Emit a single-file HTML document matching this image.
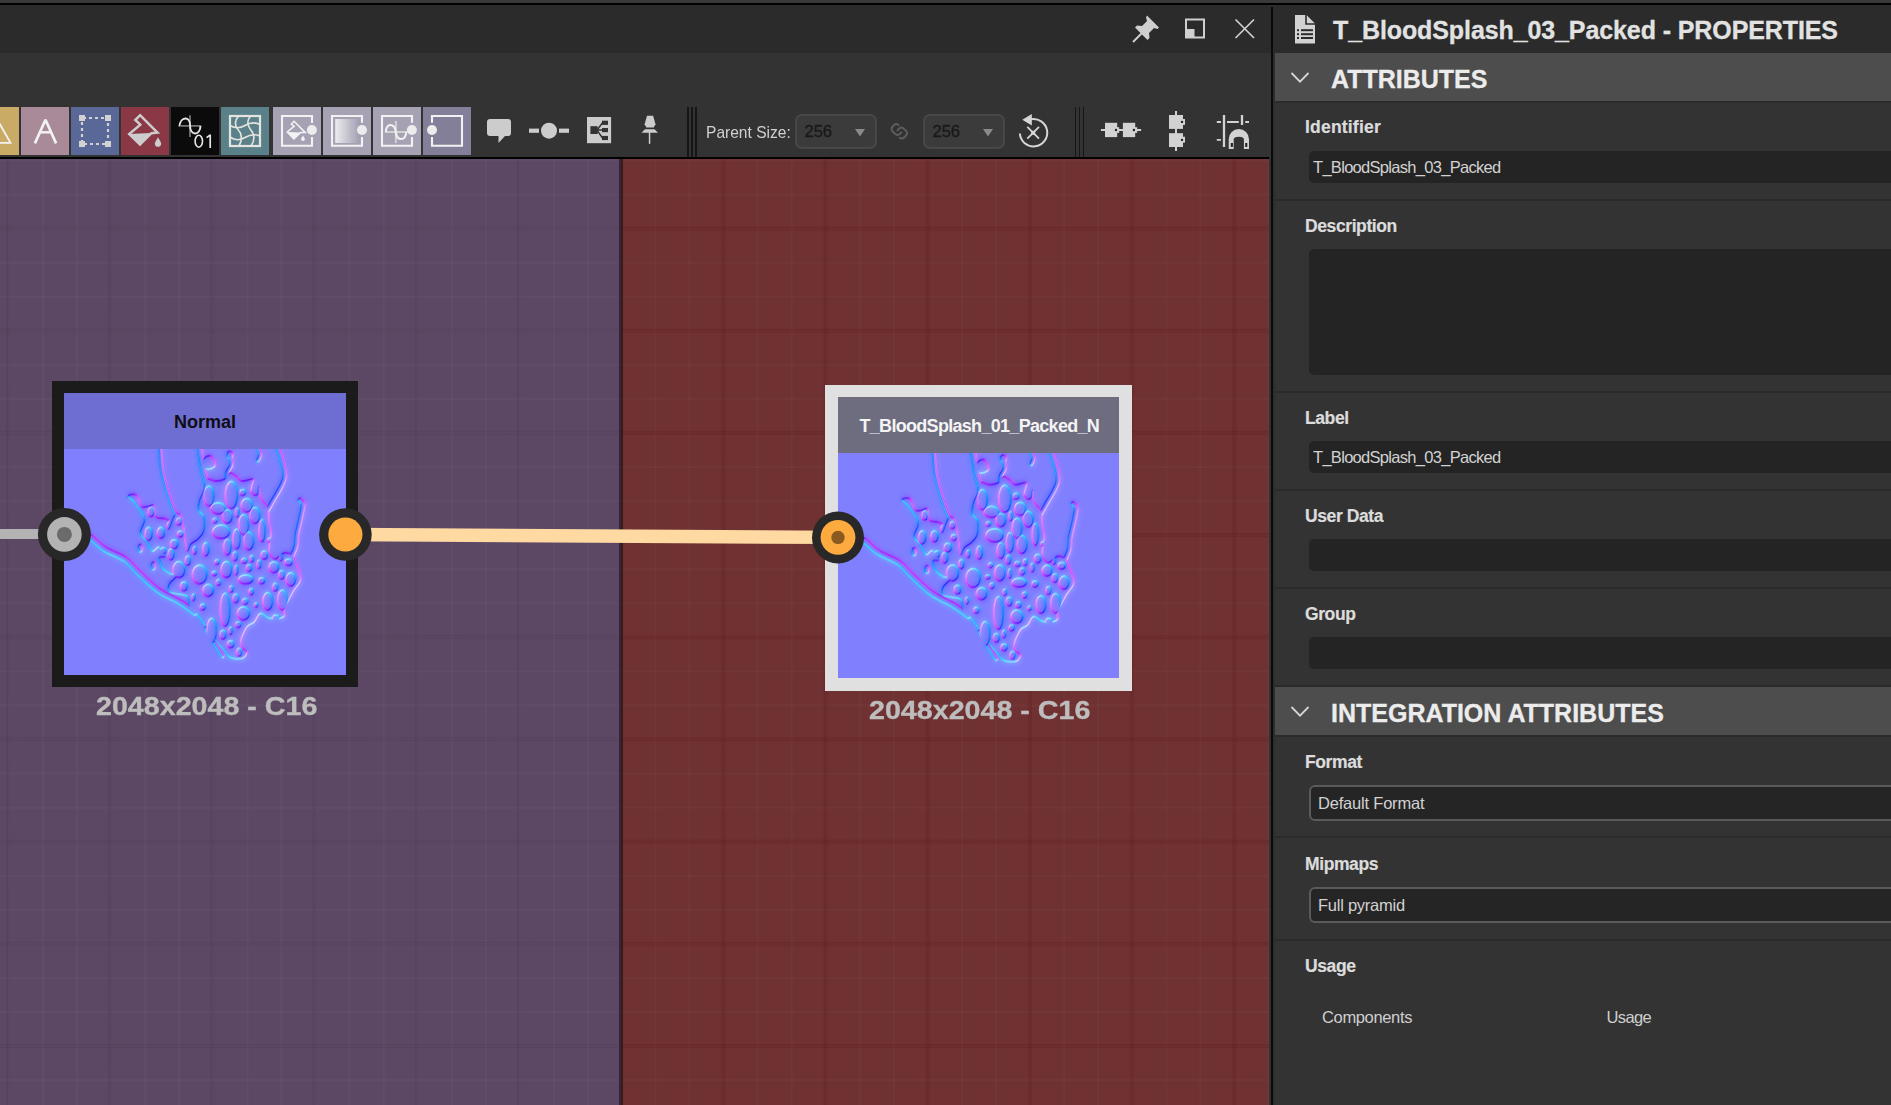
<!DOCTYPE html>
<html><head><meta charset="utf-8">
<style>
*{margin:0;padding:0;box-sizing:border-box}
html,body{width:1891px;height:1105px;overflow:hidden;background:#333;font-family:"Liberation Sans",sans-serif}
.a{position:absolute}
.t{position:absolute;white-space:nowrap;line-height:1}
.btn{position:absolute;top:107px;width:48px;height:48px}
.btn svg{position:absolute;left:0;top:0}
.sec-sep{position:absolute;left:1275px;width:616px;height:2px;background:#2b2b2b}
.lbl{position:absolute;-webkit-text-stroke:0.2px #dcdcdc;left:1305px;letter-spacing:-0.4px;font-weight:bold;font-size:17.5px;color:#dcdcdc;white-space:nowrap;line-height:1}
.inp{position:absolute;left:1309px;width:600px;height:32px;background:#242424;border-radius:5px}
.itx{position:absolute;letter-spacing:-0.7px;font-size:16.5px;color:#d2d2d2;white-space:nowrap;line-height:1}
</style></head>
<body>
<!-- top strip -->
<div class="a" style="left:0;top:0;width:1891px;height:3px;background:#393939"></div>
<div class="a" style="left:0;top:3px;width:1891px;height:2px;background:#000"></div>
<div class="a" style="left:0;top:5px;width:1891px;height:48px;background:#2b2b2b"></div>
<!-- toolbar -->
<div class="a" style="left:0;top:53px;width:1271px;height:104px;background:#333"></div>
<div class="a" style="left:0;top:157px;width:1269px;height:2px;background:#000"></div>


<!-- TOOLBAR BUTTONS -->
<div class="btn" style="left:-29px;background:#c9ab66">
 <svg width="48" height="48" viewBox="0 0 48 48"><path d="M24 8.5 L39.5 35.8 H8.5 Z" fill="none" stroke="#f2f2f2" stroke-width="1.8"/></svg>
</div>
<div class="btn" style="left:21px;background:#a88a99">
 <svg width="48" height="48" viewBox="0 0 48 48"><path d="M13.9 36.4 L24.5 12.8 L35.1 36.4" fill="none" stroke="#f2f2f2" stroke-width="2.7" stroke-linejoin="bevel"/><path d="M18.6 25.3 H30.4" stroke="#f2f2f2" stroke-width="2.5"/></svg>
</div>
<div class="btn" style="left:71px;background:#5a6898">
 <svg width="48" height="48" viewBox="0 0 48 48">
  <path d="M11 11 H37 V37 H11 Z" fill="none" stroke="#d2d2d2" stroke-width="2.2" stroke-dasharray="3 3" stroke-dashoffset="-1"/>
  <rect x="8" y="8" width="6" height="6" fill="#d2d2d2"/><rect x="34" y="8" width="6" height="6" fill="#d2d2d2"/>
  <rect x="8" y="34" width="6" height="6" fill="#d2d2d2"/><rect x="34" y="34" width="6" height="6" fill="#d2d2d2"/>
 </svg>
</div>
<div class="btn" style="left:121px;background:#8a3746">
 <svg width="48" height="48" viewBox="0 0 48 48">
  <path d="M8 27 L19 37.4 L30.4 26 Z" fill="#cdcdcd"/>
  <path d="M36.5 25.6 L19.1 8.2 L14.3 13 L19.3 17.6 L8.2 27 L19 37.4 L30.4 26.2 Z" fill="none" stroke="#cdcdcd" stroke-width="2.5" stroke-linejoin="miter"/>
  <path d="M37 30.2 C38.5 33 40.2 35 40.2 36.7 C40.2 38.6 38.7 39.8 37 39.8 C35.3 39.8 33.8 38.6 33.8 36.7 C33.8 35 35.5 33 37 30.2 Z" fill="#cdcdcd"/>
 </svg>
</div>
<div class="btn" style="left:171px;background:#0b0b0b">
 <svg width="48" height="48" viewBox="0 0 48 48">
  <path d="M19 8.2 V29.9" stroke="#7a7a7a" stroke-width="1.7"/>
  <path d="M9.7 18.9 H29.5" stroke="#7a7a7a" stroke-width="1.7"/>
  <path d="M8.4 19.5 C9.3 9 19.6 9 19.1 18.7 C18.8 29 29.4 29 29.5 18.7" fill="none" stroke="#e6e6e6" stroke-width="1.9"/>
  <ellipse cx="27.8" cy="34.2" rx="3.7" ry="6" fill="none" stroke="#e6e6e6" stroke-width="1.6"/>
  <path d="M39.2 27.6 V41 M39.3 27.9 L35.6 30.6" fill="none" stroke="#e6e6e6" stroke-width="1.7"/>
 </svg>
</div>
<div class="btn" style="left:221px;background:#5a8189">
 <svg width="48" height="48" viewBox="0 0 48 48">
  <rect x="9" y="9" width="30" height="30" fill="none" stroke="#e6e4e0" stroke-width="2.2"/>
  <g fill="none" stroke="#e6e4e0" stroke-width="1.6">
  <path d="M9 18.5 C14 21.5 19 21.5 24 18.5 C29 15.5 33 14.5 39 17.5"/>
  <path d="M9 30 C14 33.5 19 33.5 24 30.5 C29 27.5 33 26.5 39 29"/>
  <path d="M17.4 9 C13.5 14 14 19 17 22.5 C21 26.5 21.5 33 18 39"/>
  <path d="M29.5 9 C25.8 13.5 26.5 18.5 29.5 22.5 C33.5 27 34 33 30 39"/>
  </g>
 </svg>
</div>
<div class="btn" style="left:273px;background:#a6a2b4">
 <svg width="48" height="48" viewBox="0 0 48 48">
  <path d="M39 15.9 V9 H9 V38.8 H39 V30" fill="none" stroke="#f2f2f2" stroke-width="2.1"/>
  <circle cx="38.9" cy="23" r="5" fill="#ececec"/>
  <path d="M14.1 25 L20.9 31.9 L27.4 25.6 Z" fill="#f2f2f2"/>
  <path d="M32.4 25.6 L21.1 14.3 L18.3 17.1 L21.2 19.2 L14.2 25 L20.9 31.9 L27.4 25.6 Z" fill="none" stroke="#f2f2f2" stroke-width="1.5"/>
  <path d="M30 28.6 C30.8 30.2 31.9 31.2 31.9 32.3 C31.9 33.4 31 34 30 34 C29 34 28.1 33.4 28.1 32.3 C28.1 31.2 29.2 30.2 30 28.6 Z" fill="#f2f2f2"/>
 </svg>
</div>
<div class="btn" style="left:323px;background:#a6a2b4">
 <svg width="48" height="48" viewBox="0 0 48 48">
  <defs><linearGradient id="g1" x1="0" x2="1" y1="0" y2="0"><stop offset="0" stop-color="#ececee"/><stop offset="1" stop-color="#a29eb2"/></linearGradient></defs>
  <path d="M39 15.8 V9 H9 V38.8 H39 V30" fill="none" stroke="#f2f2f2" stroke-width="2.1"/>
  <rect x="12.2" y="12" width="24.5" height="24" fill="url(#g1)"/>
  <circle cx="39" cy="23" r="5" fill="#ececec"/>
 </svg>
</div>
<div class="btn" style="left:373px;background:#a6a2b4">
 <svg width="48" height="48" viewBox="0 0 48 48">
  <path d="M39 15.8 V9 H9 V38.8 H39 V30" fill="none" stroke="#f2f2f2" stroke-width="2.1"/>
  <path d="M22.9 13.9 V36 M12.2 24.9 H33.9" stroke="#d2d2d0" stroke-width="2"/>
  <path d="M12.8 25 C13.5 15.5 21.5 15.5 22.8 25 C24 34.5 32.5 34.5 33.4 24.6" fill="none" stroke="#f2f2f2" stroke-width="2"/>
  <circle cx="38.9" cy="23" r="5" fill="#ececec"/>
 </svg>
</div>
<div class="btn" style="left:423px;background:#847f99">
 <svg width="48" height="48" viewBox="0 0 48 48">
  <path d="M9 15.8 V9 H39 V38.8 H9 V30" fill="none" stroke="#f2f2f2" stroke-width="2.1"/>
  <circle cx="9" cy="23" r="5" fill="#ececec"/>
 </svg>
</div>

<!-- plain icons -->
<svg class="a" style="left:486px;top:117px" width="27" height="28" viewBox="0 0 27 28">
  <path d="M4 2 H22 Q25 2 25 5 V16 Q25 19 22 19 H19 L12.5 26 V19 H4 Q1 19 1 16 V5 Q1 2 4 2 Z" fill="#cccccc"/>
</svg>
<svg class="a" style="left:527px;top:119px" width="44" height="22" viewBox="0 0 44 22">
  <rect x="2" y="9.6" width="10" height="4.2" fill="#cccccc"/>
  <circle cx="22" cy="11.7" r="8" fill="#cccccc"/>
  <rect x="32" y="9.6" width="10" height="4.2" fill="#cccccc"/>
</svg>
<svg class="a" style="left:586px;top:116px" width="26" height="28" viewBox="0 0 26 28">
  <rect x="1" y="1" width="24.1" height="26.2" fill="#cccccc"/>
  <rect x="4.4" y="10.2" width="7.3" height="7.8" fill="#333"/>
  <rect x="16" y="4.7" width="6" height="4.2" fill="#333"/>
  <rect x="16" y="12" width="6" height="4.2" fill="#333"/>
  <rect x="16" y="19.9" width="6" height="4.2" fill="#333"/>
  <path d="M11 14.1 L16.5 6.8 M11 14.1 H16.5 M11 14.1 L16.5 22" stroke="#333" stroke-width="1.5"/>
</svg>
<svg class="a" style="left:639px;top:115px" width="22" height="30" viewBox="0 0 22 30">
  <path d="M8 0.8 H14.1 L16.5 9.3 L14.7 12.4 H7.4 L5.6 9.3 Z" fill="#cccccc"/>
  <path d="M6 14.2 H15.5 L19 17.8 H2.5 Z" fill="#cccccc"/>
  <rect x="9.8" y="17" width="1.5" height="11.8" fill="#cccccc"/>
</svg>
<!-- separators -->
<div class="a" style="left:687px;top:107px;width:11px;height:50px;background:linear-gradient(90deg,#161616 0 1.5px,#333 1.5px 4px,#161616 4px 5.5px,#333 5.5px 8px,#161616 8px 9.5px,transparent 9.5px)"></div>
<div class="a" style="left:1075px;top:107px;width:11px;height:50px;background:linear-gradient(90deg,#161616 0 1.5px,#333 1.5px 4px,#161616 4px 5.5px,#333 5.5px 8px,#161616 8px 9.5px,transparent 9.5px)"></div>

<div class="t" id="psize" style="left:706px;top:124px;font-size:17px;transform:scaleX(0.915);transform-origin:0 0;color:#d0d0d0">Parent Size:</div>
<div class="a" style="left:795px;top:113.5px;width:82px;height:35px;background:#3b3b3b;border:2px solid #474747;border-radius:7px"></div>
<div class="t" style="left:804.5px;top:122.5px;font-size:16.5px;color:#181818;-webkit-text-stroke:0.3px #181818">256</div>
<svg class="a" style="left:854px;top:128px" width="12" height="10" viewBox="0 0 12 10"><path d="M1 1 H11 L6 8.6 Z" fill="#8a8a8a"/></svg>
<svg class="a" style="left:889px;top:122px" width="20" height="19" viewBox="0 0 20 19">
  <g fill="none" stroke="#5e5e5e" stroke-width="1.9" stroke-linecap="round">
  <path d="M9.6 3.1 Q7.3 0.8 5 3.1 L3.6 4.5 Q1.3 7 3.7 9.5 L6.1 11.9 Q8.5 14.2 10.8 11.9 L12.2 10.5"/>
  <path d="M8.5 8.3 L10.1 6.7 Q12.5 4.4 14.9 6.8 L17 8.9 Q19.2 11.3 16.9 13.6 L15.3 15.2 Q13 17.4 10.8 15.9"/>
  </g>
</svg>
<div class="a" style="left:923px;top:113.5px;width:82px;height:35px;background:#3b3b3b;border:2px solid #474747;border-radius:7px"></div>
<div class="t" style="left:932.5px;top:122.5px;font-size:16.5px;color:#181818;-webkit-text-stroke:0.3px #181818">256</div>
<svg class="a" style="left:982px;top:128px" width="12" height="10" viewBox="0 0 12 10"><path d="M1 1 H11 L6 8.6 Z" fill="#8a8a8a"/></svg>

<svg class="a" style="left:1016px;top:113px" width="36" height="36" viewBox="0 0 36 36">
  <path d="M3.9 20.5 A13.7 13.7 0 1 0 14.6 6.3" fill="none" stroke="#d6d6d6" stroke-width="2"/>
  <path d="M6.3 6.8 L15.8 1 V12.4 Z" fill="#d6d6d6"/>
  <path d="M11.3 13.8 L23 25.6 M23 13.8 L11.3 25.6" stroke="#d6d6d6" stroke-width="1.8"/>
  <rect x="15.2" y="17.8" width="4" height="4" fill="#d6d6d6"/>
</svg>
<svg class="a" style="left:1100px;top:121px" width="42" height="18" viewBox="0 0 42 18">
  <path d="M0.9 9 H41.1" stroke="#d2d2d2" stroke-width="1.8"/>
  <rect x="5" y="1.8" width="12.2" height="14.3" fill="#d2d2d2"/>
  <rect x="22.9" y="1.8" width="12.3" height="14.3" fill="#d2d2d2"/>
  <rect x="17" y="6.2" width="2.2" height="5.7" fill="#d2d2d2"/><rect x="35" y="6.2" width="2.2" height="5.7" fill="#d2d2d2"/>
  <circle cx="16" cy="9" r="1.2" fill="#222"/><circle cx="33.9" cy="9" r="1.2" fill="#222"/>
</svg>
<svg class="a" style="left:1167px;top:110px" width="20" height="42" viewBox="0 0 20 42">
  <path d="M9 1 V41" stroke="#d2d2d2" stroke-width="2"/>
  <rect x="2" y="5" width="14" height="13.9" fill="#d2d2d2"/>
  <rect x="2" y="23.2" width="14" height="13.8" fill="#d2d2d2"/>
  <rect x="15.8" y="9" width="2.2" height="5.9" fill="#d2d2d2"/><rect x="15.8" y="26.7" width="2.2" height="5.9" fill="#d2d2d2"/>
  <circle cx="15" cy="11.9" r="1.2" fill="#222"/><circle cx="15" cy="29.9" r="1.2" fill="#222"/>
</svg>
<svg class="a" style="left:1215px;top:113px" width="36" height="37" viewBox="0 0 36 37">
  <path d="M1.8 9 H6 M12 9 H23.8 M30.2 9 H34 M1.8 26.9 H6" stroke="#d2d2d2" stroke-width="1.9"/>
  <path d="M9 2 V34 M27 2 V12" stroke="#d2d2d2" stroke-width="2.3"/>
  <path d="M13.7 36 V26.2 A10.15 10.1 0 0 1 34 26.2 V36 H28.9 V26.2 A5.1 2.5 0 0 0 18.7 26.2 V36 Z" fill="#d2d2d2"/>
  <rect x="15.8" y="30" width="2.1" height="3.9" fill="#222"/><rect x="30.2" y="30" width="2.1" height="3.9" fill="#222"/>
</svg>
<!-- canvas -->
<div id="canvas" class="a" style="left:0;top:159px;width:1269px;height:946px;overflow:hidden">
  <div class="a" style="left:0;top:0;width:619px;height:946px;background-color:#5c4864;
    background-image:
      linear-gradient(90deg, rgba(40,25,50,0.10) 0 4px, transparent 4px),
      linear-gradient(180deg, rgba(40,25,50,0.10) 0 4px, transparent 4px),
      linear-gradient(90deg, rgba(255,255,255,0.024) 0 2px, transparent 2px),
      linear-gradient(180deg, rgba(255,255,255,0.024) 0 2px, transparent 2px);
    background-size:102.2px 102.2px,102.2px 102.2px,34.067px 34.067px,34.067px 34.067px;
    background-position:6px 67.5px,6px 67.5px,8px 0.5px,8px 0.5px"></div>
  <div class="a" style="left:619px;top:0;width:2px;height:946px;background:#30283a"></div>
  <div class="a" style="left:621px;top:0;width:2px;height:946px;background:#3f1818"></div>
  <div class="a" style="left:623px;top:0;width:647px;height:946px;background-color:#6f3132;
    background-image:
      linear-gradient(90deg, rgba(90,20,22,0.25) 0 4px, transparent 4px),
      linear-gradient(180deg, rgba(90,20,22,0.25) 0 4px, transparent 4px),
      linear-gradient(90deg, rgba(255,255,255,0.024) 0 2px, transparent 2px),
      linear-gradient(180deg, rgba(255,255,255,0.024) 0 2px, transparent 2px);
    background-size:102.2px 102.2px,102.2px 102.2px,34.067px 34.067px,34.067px 34.067px;
    background-position:98.4px 67.5px,98.4px 67.5px,31.4px 0.5px,31.4px 0.5px"></div>
</div>


<!-- NODES -->
<svg width="0" height="0" style="position:absolute"><defs><symbol id="tex" viewBox="0 0 282 282">
<filter id="nm" x="0" y="0" width="282" height="282" filterUnits="userSpaceOnUse" color-interpolation-filters="sRGB"><feGaussianBlur in="SourceAlpha" stdDeviation="0.55" result="h1"/><feGaussianBlur in="SourceAlpha" stdDeviation="2.6" result="h2"/><feComposite in="h1" in2="h2" operator="arithmetic" k1="0" k2="0.4" k3="0.6" k4="0" result="h"/><feColorMatrix in="h" type="matrix" values="0 0 0 1 0  0 0 0 1 0  0 0 0 1 0  0 0 0 0 1" result="hg"/><feConvolveMatrix in="hg" order="3" kernelMatrix="0 0 0  -1 0 1  0 0 0" divisor="1.6" bias="0.5" preserveAlpha="true" result="dx"/><feConvolveMatrix in="hg" order="3" kernelMatrix="0 -1 0  0 0 0  0 1 0" divisor="1.6" bias="0.5" preserveAlpha="true" result="dy"/><feColorMatrix in="dx" type="matrix" values="1 0 0 0 0  0 0 0 0 0  0 0 0 0 0  0 0 0 0 1" result="rx"/><feColorMatrix in="dy" type="matrix" values="0 0 0 0 0  0 1 0 0 0  0 0 0 0 0  0 0 0 0 1" result="gy"/><feComposite in="rx" in2="gy" operator="arithmetic" k1="0" k2="1" k3="1" k4="0" result="rg"/><feColorMatrix in="rg" type="matrix" values="1 0 0 0 0  0 1 0 0 0  0 0 0 0 1  0 0 0 0 1"/></filter>
<mask id="hm" maskUnits="userSpaceOnUse" x="0" y="0" width="282" height="282"><rect width="282" height="282" fill="#fff"/><ellipse cx="167.4" cy="102" rx="6.1" ry="13.5" fill="#000"/><ellipse cx="144.9" cy="103" rx="4.9" ry="10.1" fill="#000"/><ellipse cx="182.7" cy="112.2" rx="5.5" ry="6.7" fill="#000"/><ellipse cx="190.9" cy="122.5" rx="4.9" ry="7.9" fill="#000"/><ellipse cx="163.3" cy="123.5" rx="4.9" ry="6.7" fill="#000"/><ellipse cx="154.1" cy="115.3" rx="7.3" ry="5.6" fill="#000"/><ellipse cx="190.9" cy="97" rx="3.0" ry="5.0" fill="#000"/><ellipse cx="157.1" cy="138.8" rx="8.6" ry="6.7" fill="#000"/><ellipse cx="179.6" cy="131.7" rx="4.9" ry="10.1" fill="#000"/><ellipse cx="184.7" cy="148" rx="4.9" ry="9.0" fill="#000"/><ellipse cx="163.3" cy="154.2" rx="3.7" ry="7.9" fill="#000"/><ellipse cx="198" cy="137.8" rx="3.1" ry="11.2" fill="#000"/><ellipse cx="172.5" cy="146" rx="3.7" ry="10.1" fill="#000"/><ellipse cx="141.8" cy="156.2" rx="3.0" ry="6.7" fill="#000"/><ellipse cx="110.1" cy="151.1" rx="3.6" ry="4.4" fill="#000"/><ellipse cx="107" cy="161.3" rx="3.0" ry="5.5" fill="#000"/><ellipse cx="84.5" cy="140.9" rx="3.6" ry="6.6" fill="#000"/><ellipse cx="75.3" cy="125.5" rx="4.8" ry="3.3" fill="#000"/><ellipse cx="96.8" cy="139.8" rx="3.6" ry="5.5" fill="#000"/><ellipse cx="135.6" cy="181.5" rx="7.2" ry="9.4" fill="#000"/><ellipse cx="144.1" cy="197.3" rx="5.2" ry="6.1" fill="#000"/><ellipse cx="162.3" cy="176.6" rx="5.2" ry="8.0" fill="#000"/><ellipse cx="114.9" cy="176.6" rx="6.0" ry="8.0" fill="#000"/><ellipse cx="147.7" cy="237.4" rx="4.8" ry="12.1" fill="#000"/><ellipse cx="161.1" cy="216.7" rx="4.8" ry="16.5" fill="#000"/><ellipse cx="181.8" cy="186.3" rx="7.2" ry="4.4" fill="#000"/><ellipse cx="179.4" cy="220.4" rx="6.0" ry="6.6" fill="#000"/><ellipse cx="203.7" cy="208.2" rx="4.8" ry="8.8" fill="#000"/><ellipse cx="218.3" cy="207" rx="4.8" ry="9.9" fill="#000"/><ellipse cx="226.8" cy="186.3" rx="4.8" ry="6.6" fill="#000"/><ellipse cx="224.4" cy="169.3" rx="3.6" ry="3.3" fill="#000"/><ellipse cx="209.8" cy="174.2" rx="4.8" ry="5.5" fill="#000"/><ellipse cx="197.6" cy="187.7" rx="3.0" ry="3.0" fill="#000"/><ellipse cx="129.4" cy="204.3" rx="1.6" ry="3.4" fill="#000"/><ellipse cx="158.9" cy="241.7" rx="2.9" ry="4.4" fill="#000"/><ellipse cx="130.6" cy="157.4" rx="1.8" ry="3.8" fill="#000"/><ellipse cx="195.0" cy="171.2" rx="1.9" ry="4.3" fill="#000"/><ellipse cx="123.7" cy="167.7" rx="2.5" ry="4.6" fill="#000"/><ellipse cx="150.3" cy="180.5" rx="2.4" ry="2.2" fill="#000"/><ellipse cx="172.3" cy="177.1" rx="1.7" ry="4.8" fill="#000"/><ellipse cx="116.2" cy="141.1" rx="2.8" ry="3.0" fill="#000"/><ellipse cx="187.2" cy="198.7" rx="2.2" ry="3.1" fill="#000"/><ellipse cx="114.8" cy="128.5" rx="2.5" ry="3.6" fill="#000"/><ellipse cx="178.7" cy="99.5" rx="2.8" ry="2.9" fill="#000"/><ellipse cx="181.0" cy="208.4" rx="2.7" ry="3.0" fill="#000"/><ellipse cx="153.0" cy="168.9" rx="2.3" ry="2.5" fill="#000"/><ellipse cx="154.4" cy="189.4" rx="2.2" ry="2.8" fill="#000"/><ellipse cx="187.8" cy="165.8" rx="2.0" ry="3.3" fill="#000"/><ellipse cx="171.7" cy="205.3" rx="2.8" ry="4.4" fill="#000"/><ellipse cx="167.3" cy="195.9" rx="1.9" ry="3.2" fill="#000"/><ellipse cx="99.3" cy="157.6" rx="2.4" ry="3.2" fill="#000"/><ellipse cx="175.1" cy="259.2" rx="2.5" ry="3.9" fill="#000"/><ellipse cx="170.9" cy="163.2" rx="2.4" ry="4.5" fill="#000"/><ellipse cx="138.7" cy="214.1" rx="2.5" ry="3.0" fill="#000"/><ellipse cx="174.2" cy="231.6" rx="2.6" ry="2.9" fill="#000"/><ellipse cx="184.8" cy="175.1" rx="2.6" ry="3.4" fill="#000"/><ellipse cx="180.1" cy="167.7" rx="2.8" ry="2.5" fill="#000"/><ellipse cx="166.6" cy="251.2" rx="3.2" ry="3.4" fill="#000"/><ellipse cx="119.8" cy="193.4" rx="3.2" ry="4.4" fill="#000"/><ellipse cx="200.3" cy="162.1" rx="3.1" ry="4.2" fill="#000"/><ellipse cx="205.3" cy="147.3" rx="1.8" ry="2.2" fill="#000"/><ellipse cx="166.5" cy="237.8" rx="1.8" ry="3.7" fill="#000"/><ellipse cx="211.2" cy="194.1" rx="2.5" ry="3.9" fill="#000"/><ellipse cx="216.8" cy="164.6" rx="1.7" ry="3.2" fill="#000"/><ellipse cx="150.9" cy="127.5" rx="2.3" ry="2.5" fill="#000"/><ellipse cx="173.2" cy="119.6" rx="1.8" ry="4.6" fill="#000"/><ellipse cx="192.1" cy="212.0" rx="1.7" ry="2.3" fill="#000"/><ellipse cx="217.6" cy="181.7" rx="2.7" ry="4.3" fill="#000"/><ellipse cx="86.9" cy="118.9" rx="2.8" ry="4.6" fill="#000"/><ellipse cx="211.8" cy="224.4" rx="3.1" ry="2.3" fill="#000"/></mask>
<g filter="url(#nm)"><rect width="282" height="282" fill="#000" fill-opacity="0"/><g mask="url(#hm)"><path d="M142.0 86.0 C144.0 84.5 148.8 88.0 152.0 88.0 C155.2 88.0 158.7 87.3 161.0 86.0 C163.3 84.7 164.2 80.5 166.0 80.0 C167.8 79.5 170.0 81.7 172.0 83.0 C174.0 84.3 175.2 87.5 178.0 88.0 C180.8 88.5 187.3 85.3 189.0 86.0 C190.7 86.7 188.3 89.8 188.0 92.0 C187.7 94.2 186.2 97.3 187.0 99.0 C187.8 100.7 191.7 103.0 193.0 102.0 C194.3 101.0 194.5 93.0 195.0 93.0 C195.5 93.0 195.5 99.7 196.0 102.0 C196.5 104.3 196.7 104.8 198.0 107.0 C199.3 109.2 202.8 111.5 204.0 115.0 C205.2 118.5 204.5 123.7 205.0 128.0 C205.5 132.3 207.0 136.0 207.0 141.0 C207.0 146.0 204.3 153.8 205.0 158.0 C205.7 162.2 208.5 165.7 211.0 166.0 C213.5 166.3 217.2 160.7 220.0 160.0 C222.8 159.3 226.1 160.4 228.0 162.0 C229.9 163.6 230.3 165.2 231.7 169.3 C233.1 173.4 236.9 181.4 236.5 186.3 C236.1 191.2 231.8 193.6 229.2 198.5 C226.6 203.4 222.3 211.2 220.7 215.5 C219.1 219.8 221.9 222.4 219.5 224.0 C217.1 225.6 209.9 225.9 206.1 225.3 C202.2 224.7 199.0 219.8 196.4 220.4 C193.8 221.0 192.5 226.7 190.3 228.9 C188.1 231.1 185.2 230.8 183.0 233.8 C180.8 236.9 177.7 243.8 176.9 247.2 C176.1 250.6 177.2 252.5 178.2 254.5 C179.2 256.5 183.0 257.5 183.0 259.3 C183.0 261.1 181.0 264.6 178.2 265.4 C175.4 266.2 169.1 265.6 166.0 264.2 C162.9 262.8 162.3 259.7 159.9 256.9 C157.5 254.1 154.2 250.8 151.4 247.2 C148.6 243.5 145.7 239.1 142.9 235.0 C140.1 230.9 137.2 226.5 134.4 222.8 C131.6 219.2 127.6 216.3 125.8 213.1 C124.0 209.9 125.4 205.4 123.4 203.4 C121.4 201.4 116.7 201.7 113.7 200.9 C110.7 200.1 106.6 200.1 105.2 198.5 C103.8 196.9 104.0 193.8 105.2 191.2 C106.4 188.6 112.5 184.5 112.5 182.7 C112.5 180.9 107.6 181.6 105.2 180.2 C102.8 178.8 99.5 176.8 97.9 174.2 C96.3 171.6 94.9 166.2 95.4 164.4 C95.9 162.6 101.0 165.1 100.9 163.4 C100.8 161.7 96.8 155.1 94.8 154.2 C92.8 153.3 90.6 159.2 88.6 158.2 C86.5 157.2 84.5 151.1 82.5 148.0 C80.5 144.9 76.8 143.6 76.4 139.8 C76.1 136.1 81.4 130.6 80.4 125.5 C79.4 120.4 72.9 113.0 70.2 109.2 C67.5 105.5 63.7 104.2 64.1 103.0 C64.4 101.8 70.1 100.3 72.3 102.0 C74.5 103.7 75.4 111.4 77.4 113.3 C79.4 115.2 82.5 113.5 84.5 113.3 C86.5 113.1 88.5 110.5 89.7 112.2 C90.9 113.9 90.0 121.3 91.7 123.5 C93.4 125.7 97.7 124.8 99.9 125.5 C102.1 126.2 104.5 126.6 105.0 127.6 C105.5 128.6 103.0 130.3 103.0 131.7 C103.0 133.1 103.7 137.5 105.0 135.8 C106.3 134.1 109.2 123.6 111.1 121.4 C113.0 119.2 114.8 120.6 116.2 122.5 C117.6 124.4 118.5 128.4 119.3 132.7 C120.1 136.9 120.6 143.8 121.3 148.0 C122.0 152.2 122.5 157.7 123.4 158.2 C124.4 158.7 125.2 153.0 127.0 151.0 C128.8 149.0 131.9 148.2 134.0 146.0 C136.1 143.8 138.8 141.6 139.8 137.8 C140.8 134.1 140.7 126.9 139.8 123.5 C138.9 120.1 135.3 120.0 134.6 117.3 C133.9 114.6 134.8 110.5 135.7 107.1 C136.6 103.7 138.8 100.4 139.8 96.9 C140.9 93.4 140.0 87.5 142.0 86.0 Z" fill="#000"/><path d="M140.0 66.0 C140.8 63.8 145.2 61.8 147.0 63.0 C148.8 64.2 151.8 70.8 151.0 73.0 C150.2 75.2 143.8 77.2 142.0 76.0 C140.2 74.8 139.2 68.2 140.0 66.0 Z" fill="#000"/><path d="M26.6 144.0 C29.0 146.0 35.1 152.5 40.9 156.2 C46.7 159.9 55.8 162.7 61.3 166.4 C66.8 170.2 68.1 173.6 73.6 178.7 C79.0 183.8 86.8 192.0 94.0 197.1 C101.2 202.2 110.4 205.7 116.6 209.4 C122.8 213.2 128.5 217.9 130.9 219.6 " fill="none" stroke="#000" stroke-width="4.6" stroke-linecap="round"/><path d="M142.0 235.0 C143.2 237.0 146.2 242.5 149.0 247.2 C151.8 251.9 157.1 260.4 158.7 263.0 " fill="none" stroke="#000" stroke-width="3" stroke-linecap="round"/><path d="M236.0 107.0 C236.5 107.8 239.0 108.5 239.0 112.0 C239.0 115.5 237.0 123.2 236.0 128.0 C235.0 132.8 233.7 136.8 233.0 141.0 C232.3 145.2 232.8 149.3 232.0 153.0 C231.2 156.7 228.7 161.3 228.0 163.0 " fill="none" stroke="#000" stroke-width="3.6" stroke-linecap="round"/><path d="M212.4 50.0 C213.6 53.9 218.2 67.6 219.5 73.4 C220.8 79.2 221.0 81.0 220.5 84.6 C220.0 88.2 218.3 91.2 216.4 94.9 C214.5 98.7 211.3 103.5 209.3 107.1 C207.3 110.7 205.0 114.8 204.2 116.3 " fill="none" stroke="#000" stroke-width="3.5" stroke-linecap="round"/><path d="M95.8 50.0 C96.1 54.4 96.6 68.6 97.8 76.4 C99.0 84.2 100.7 89.7 102.9 96.9 C105.1 104.1 109.0 115.1 111.1 119.4 C113.1 123.7 114.5 122.0 115.2 122.5 " fill="none" stroke="#000" stroke-width="2.6" stroke-linecap="round"/><path d="M165.3 60.0 C165.7 61.9 167.7 68.0 167.4 71.3 C167.1 74.5 164.0 77.0 163.3 79.5 C162.6 82.0 163.1 84.9 163.0 86.0 " fill="none" stroke="#000" stroke-width="3.2" stroke-linecap="round"/><path d="M191.9 50.0 C192.6 51.9 195.7 58.2 196.0 61.1 C196.3 64.0 194.3 66.2 194.0 67.2 " fill="none" stroke="#000" stroke-width="3" stroke-linecap="round"/><path d="M135.0 50.0 C135.5 53.7 136.8 65.7 138.0 72.0 C139.2 78.3 141.3 85.3 142.0 88.0 " fill="none" stroke="#000" stroke-width="4.5" stroke-linecap="round"/><ellipse cx="166" cy="62" rx="3" ry="3.5" fill="#000"/><ellipse cx="89.3" cy="173" rx="2" ry="4" fill="#000"/><ellipse cx="76.4" cy="155.2" rx="2" ry="4" fill="#000"/></g></g>
</symbol></defs></svg>

<!-- wires -->
<div class="a" style="left:0;top:529px;width:40px;height:10px;background:#b3b3b3"></div>
<svg class="a" style="left:0;top:0" width="1270" height="1105"><path d="M345.5 534.5 L838 537.4" stroke="#fed9a2" stroke-width="13.4"/></svg>

<!-- left node -->
<div class="a" style="left:52px;top:381px;width:306px;height:306px;background:#1b1b1b"></div>
<svg class="a" style="left:64px;top:393px" width="282" height="282"><use href="#tex"/></svg>
<div class="a" style="left:64px;top:393px;width:282px;height:56px;background:#6e6dd1"></div>
<div class="t" id="nnormal" style="left:174px;top:412.8px;font-size:18px;font-weight:bold;color:#0e0e14">Normal</div>
<svg class="a" style="left:0;top:0" width="420" height="700">
  <circle cx="64.4" cy="534.4" r="26.5" fill="#282828"/>
  <circle cx="64.4" cy="534.4" r="17.3" fill="#b3b3b3"/>
  <circle cx="64.4" cy="534.4" r="7.5" fill="#6b6b6b"/>
  <circle cx="345.4" cy="534.5" r="26.3" fill="#282828"/>
  <circle cx="345.4" cy="534.5" r="17.1" fill="#fdab3f"/>
</svg>
<div class="t" id="lab1" style="left:95.5px;top:694px;font-size:25px;transform:scaleX(1.146);transform-origin:0 0;-webkit-text-stroke:0.35px #bdbdbd;font-weight:bold;color:#bdbdbd">2048x2048 - C16</div>

<!-- right node -->
<div class="a" style="left:825px;top:385px;width:307px;height:306px;background:#e0e0e0"></div>
<svg class="a" style="left:838px;top:397px" width="281" height="281"><use href="#tex"/></svg>
<div class="a" style="left:838px;top:397px;width:281px;height:56px;background:#6e6d80"></div>
<div class="t" id="nbs" style="left:859.5px;letter-spacing:-0.7px;top:416.8px;font-size:18px;font-weight:bold;color:#f4f4f4">T_BloodSplash_01_Packed_N</div>
<svg class="a" style="left:780px;top:480px" width="120" height="120">
  <circle cx="58" cy="57.4" r="26" fill="#282828"/>
  <circle cx="58" cy="57.4" r="17.4" fill="#fdab3f"/>
  <circle cx="58" cy="57.4" r="6.7" fill="#8b5a20"/>
</svg>
<div class="t" id="lab2" style="left:869px;top:698px;font-size:25px;transform:scaleX(1.146);transform-origin:0 0;-webkit-text-stroke:0.35px #bdbdbd;font-weight:bold;color:#bdbdbd">2048x2048 - C16</div>

<!-- vertical divider + right panel -->
<div class="a" style="left:1269px;top:157px;width:2px;height:948px;background:#2f3333"></div>
<div class="a" style="left:1271px;top:7px;width:2px;height:1098px;background:#0a0a0a"></div>
<div class="a" style="left:1273px;top:53px;width:2px;height:1052px;background:#2e2e2e"></div>
<div class="a" style="left:1275px;top:53px;width:616px;height:1052px;background:#333"></div>

<!-- PANEL -->

<!-- panel title bar -->
<svg class="a" style="left:1294px;top:15px" width="22" height="29" viewBox="0 0 22 29">
  <path d="M1 0 H12.5 L21 8.5 V28.5 H1 Z" fill="#d2d2d2"/>
  <path d="M12 0 V9 H21" fill="none" stroke="#2b2b2b" stroke-width="1.6"/>
  <rect x="3" y="14.2" width="2" height="2" fill="#2b2b2b"/>
  <rect x="7" y="14.2" width="12" height="2" fill="#2b2b2b"/>
  <rect x="3" y="18.2" width="2" height="2" fill="#2b2b2b"/>
  <rect x="7" y="18.2" width="12" height="2" fill="#2b2b2b"/>
  <rect x="3" y="22" width="2" height="2" fill="#2b2b2b"/>
  <rect x="7" y="22" width="12" height="2" fill="#2b2b2b"/>
</svg>
<div class="t" id="title" style="-webkit-text-stroke:0.3px #e2e2e2;left:1333px;top:18.2px;letter-spacing:-0.1px;font-size:25px;font-weight:bold;color:#e2e2e2">T_BloodSplash_03_Packed - PROPERTIES</div>

<!-- window icons -->
<svg class="a" style="left:1130px;top:13px" width="32" height="32" viewBox="0 0 32 32">
  <path d="M3 29 L13 19" stroke="#cfcfcf" stroke-width="2"/>
  <path d="M17 2.5 L29 14.5 L27.5 16 L24 15 L19 20 L19.5 25 L17.5 27 L5 14.5 L7 12.5 L12 13 L17 8 L16 4.5 Z" fill="#cfcfcf"/>
</svg>
<svg class="a" style="left:1184px;top:18px" width="22" height="22" viewBox="0 0 22 22">
  <rect x="2" y="1.5" width="18" height="18" fill="none" stroke="#d0d0d0" stroke-width="2"/>
  <rect x="2" y="11" width="8.5" height="9" fill="#d0d0d0"/>
</svg>
<svg class="a" style="left:1234px;top:18px" width="22" height="22" viewBox="0 0 22 22">
  <path d="M1.5 1.5 L20 20 M20 1.5 L1.5 20" stroke="#d0d0d0" stroke-width="1.7"/>
</svg>

<!-- ATTRIBUTES header -->
<div class="a" style="left:1275px;top:53px;width:616px;height:48px;background:#4d4d4d"></div>
<div class="a" style="left:1275px;top:101px;width:616px;height:2px;background:#2b2b2b"></div>
<svg class="a" style="left:1290px;top:71px" width="20" height="14" viewBox="0 0 20 14">
  <path d="M1.5 2 L10 10.6 L18.5 2" fill="none" stroke="#d6d6d6" stroke-width="1.8"/>
</svg>
<div class="t" id="attr" style="-webkit-text-stroke:0.3px #ececec;left:1331px;top:66.8px;font-size:25px;font-weight:bold;color:#ececec">ATTRIBUTES</div>

<div class="lbl" style="top:118.5px;letter-spacing:0.2px">Identifier</div>
<div class="inp" style="top:151px;height:32px"></div>
<div class="itx" style="left:1313px;top:158.7px">T_BloodSplash_03_Packed</div>
<div class="sec-sep" style="top:199px"></div>

<div class="lbl" style="top:218px">Description</div>
<div class="inp" style="top:249px;height:126px"></div>
<div class="sec-sep" style="top:391px"></div>

<div class="lbl" style="top:409.7px">Label</div>
<div class="inp" style="top:441px;height:32px"></div>
<div class="itx" style="left:1313px;top:448.7px">T_BloodSplash_03_Packed</div>
<div class="sec-sep" style="top:489px"></div>

<div class="lbl" style="top:507.5px">User Data</div>
<div class="inp" style="top:539px;height:32px"></div>
<div class="sec-sep" style="top:587px"></div>

<div class="lbl" style="top:605.7px">Group</div>
<div class="inp" style="top:637px;height:32px"></div>
<div class="sec-sep" style="top:685px"></div>

<!-- INTEGRATION ATTRIBUTES header -->
<div class="a" style="left:1275px;top:687px;width:616px;height:48px;background:#4d4d4d"></div>
<div class="a" style="left:1275px;top:735px;width:616px;height:2px;background:#2b2b2b"></div>
<svg class="a" style="left:1290px;top:705px" width="20" height="14" viewBox="0 0 20 14">
  <path d="M1.5 2 L10 10.6 L18.5 2" fill="none" stroke="#d6d6d6" stroke-width="1.8"/>
</svg>
<div class="t" id="iattr" style="-webkit-text-stroke:0.3px #ececec;left:1331px;top:700.8px;font-size:25px;font-weight:bold;color:#ececec">INTEGRATION ATTRIBUTES</div>

<div class="lbl" style="top:754.2px">Format</div>
<div class="a" style="left:1309px;top:785px;width:600px;height:36px;background:#252525;border:2px solid #5a5a5a;border-radius:6px"></div>
<div class="itx" style="left:1318px;top:794.8px;letter-spacing:-0.2px">Default Format</div>
<div class="sec-sep" style="top:836px"></div>

<div class="lbl" style="top:856.1px">Mipmaps</div>
<div class="a" style="left:1309px;top:887px;width:600px;height:36px;background:#252525;border:2px solid #5a5a5a;border-radius:6px"></div>
<div class="itx" style="left:1318px;top:897px;letter-spacing:-0.25px">Full pyramid</div>
<div class="sec-sep" style="top:939px"></div>

<div class="lbl" style="top:958px">Usage</div>
<div class="itx" style="left:1322px;top:1009.2px;color:#cfcfcf;letter-spacing:-0.35px">Components</div>
<div class="itx" style="left:1606.5px;top:1009.2px;color:#cfcfcf;letter-spacing:-0.6px">Usage</div>


</body></html>
